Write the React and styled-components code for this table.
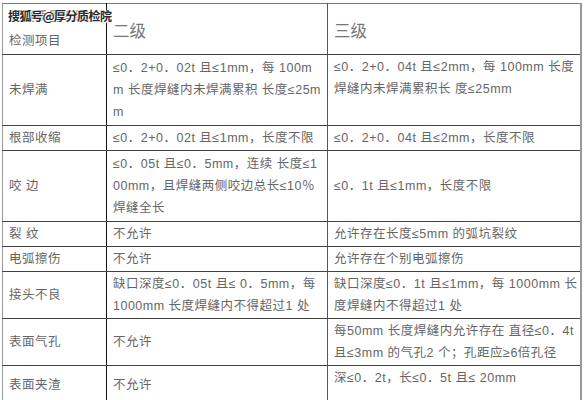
import React from "react";
import styled, { createGlobalStyle } from "styled-components";

const GlobalStyle = createGlobalStyle`
  html, body {
    margin: 0;
    padding: 0;
    background: #ffffff;
  }
`;

const Page = styled.div`
  position: relative;
  padding: 3px 2px 0 2px;
  width: 585px;
  height: 400px;
  box-sizing: border-box;
  background: #ffffff;
  font-family: "Liberation Sans", "Noto Sans CJK SC", sans-serif;
  overflow: hidden;
`;

const Table = styled.table`
  width: 580px;
  border-collapse: collapse;
  table-layout: fixed;
  border-top: 1px solid #777;
  border-left: 1px solid #999;
  border-right: 2px solid #999;
  border-bottom: 2px solid #999;
  color: #666;
  font-size: 12.5px;
  letter-spacing: 0.5px;
`;

const Row = styled.tr`
  height: ${(p) => p.$h}px;
`;

const Cell = styled.td`
  padding: 1px ${(p) => p.$pr ?? 5}px 1px 6px;
  line-height: 22px;
  vertical-align: ${(p) => (p.$top ? "top" : "middle")};
  border-bottom: 1px solid #444;
  border-right: 1px solid ${(p) => (p.$first ? "#111" : "#555")};
  word-break: break-all;
`;

const LabelCell = styled(Cell)`
  line-height: 24px;
  vertical-align: top;
`;

const GradeCell = styled(Cell)`
  font-size: 16.5px;
  color: #777;
  letter-spacing: 0;
  padding-top: 4px;
`;

const Watermark = styled.div`
  position: absolute;
  left: 8px;
  top: 7px;
  font-family: "Noto Sans CJK SC", sans-serif;
  font-size: 12px;
  font-weight: 700;
  letter-spacing: -0.5px;
  color: #2a2a2a;
  text-shadow: 0 0 2px #fff, 0 0 1px #fff, 1px 1px 0 #fff;
`;

const rows = [
  {
    name: "未焊满",
    h: 71,
    a: "≤0．2+0．02t 且≤1mm，每 100mm 长度焊缝内未焊满累积 长度≤25mm",
    b: "≤0．2+0．04t 且≤2mm，每 100mm 长度焊缝内未焊满累积长 度≤25mm",
    bTop: true,
  },
  {
    name: "根部收缩",
    h: 25,
    a: "≤0．2+0．02t 且≤1mm，长度不限",
    b: "≤0．2+0．04t 且≤2mm，长度不限",
  },
  {
    name: "咬 边",
    h: 71,
    a: "≤0．05t 且≤0．5mm，连续 长度≤100mm，且焊缝两侧咬边总长≤10％焊缝全长",
    b: "≤0．1t 且≤1mm，长度不限",
  },
  { name: "裂 纹", h: 24, a: "不允许", b: "允许存在长度≤5mm 的弧坑裂纹" },
  { name: "电弧擦伤", h: 25, a: "不允许", b: "允许存在个别电弧擦伤" },
  {
    name: "接头不良",
    h: 44,
    a: "缺口深度≤0．05t 且≤ 0．5mm，每 1000mm 长度焊缝内不得超过1 处",
    b: "缺口深度≤0．1t 且≤1mm，每 1000mm 长度焊缝内不得超过1 处",
  },
  {
    name: "表面气孔",
    h: 45,
    a: "不允许",
    b: "每50mm 长度焊缝内允许存在 直径≤0．4t 且≤3mm 的气孔2 个；孔距应≥6倍孔径",
  },
  {
    name: "表面夹渣",
    h: 40,
    a: "不允许",
    b: "深≤0．2t，长≤0．5t 且≤ 20mm",
    bTop: true,
  },
];

export default function App() {
  return (
    <>
      <GlobalStyle />
      <Page>
        <Table>
          <colgroup>
            <col style={{ width: 104 }} />
            <col style={{ width: 221 }} />
            <col />
          </colgroup>
          <tbody>
            <Row $h={48}>
              <LabelCell $first>
                焊缝质量等级
                <br />
                检测项目
              </LabelCell>
              <GradeCell>二级</GradeCell>
              <GradeCell>三级</GradeCell>
            </Row>
            {rows.map((r) => (
              <Row key={r.name} $h={r.h}>
                <Cell $first>{r.name}</Cell>
                <Cell>{r.a}</Cell>
                <Cell $top={r.bTop} $pr={2}>
                  {r.b}
                </Cell>
              </Row>
            ))}
          </tbody>
        </Table>
        <Watermark>搜狐号@厚分质检院</Watermark>
      </Page>
    </>
  );
}
